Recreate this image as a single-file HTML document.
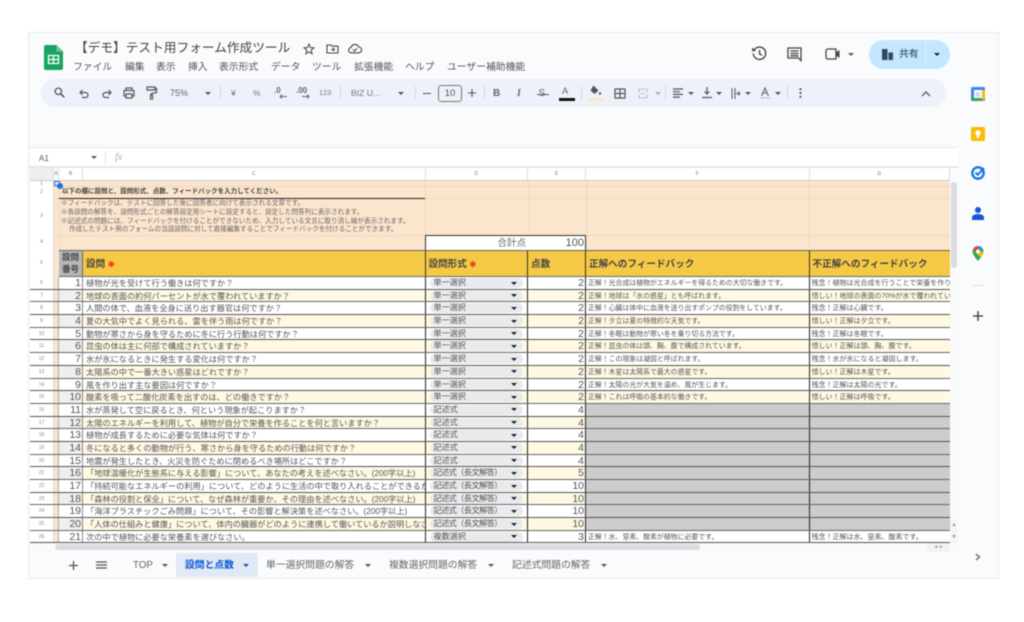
<!DOCTYPE html>
<html lang="ja"><head><meta charset="utf-8"><title>Sheet</title>
<style>
*{margin:0;padding:0;box-sizing:border-box}
html,body{width:1024px;height:622px;overflow:hidden;background:#fff}
body{font-family:"Liberation Sans","Noto Sans CJK JP",sans-serif;color:#555}
#w{position:absolute;left:0;top:0;width:1024px;height:622px;overflow:hidden;filter:blur(.55px)}
.a{position:absolute;white-space:nowrap}
.m{font-size:9.8px;top:60.5px;color:#555;line-height:13px}
.tb{top:87px;line-height:12px;color:#666}
.sep{position:absolute;width:1px;background:#d5d9e0;top:86px;height:14px}
.ar{position:absolute;width:0;height:0;border-left:3px solid transparent;border-right:3px solid transparent;border-top:3px solid #555}
svg{position:absolute;overflow:visible}
.ch{position:absolute;top:168px;height:13px;background:#fff;border-right:1px solid #ddd;border-bottom:1px solid #ccc;font-size:5px;line-height:13px;text-align:center;color:#777}
.rh{position:absolute;left:30px;width:24px;background:#fff;border-right:1px solid #ddd;font-size:5px;text-align:center;color:#888}
.tab{position:absolute;top:559px;font-size:9.8px;line-height:13px;color:#666;white-space:nowrap}
#g{position:absolute;left:30px;top:277px;width:920px;height:266px;overflow:hidden}
.r{display:flex;height:12.7px;border-bottom:1px solid #666;background:#fff;line-height:13.2px;white-space:nowrap}
.r:nth-child(even){background:#fff8e3}
.r:nth-child(odd){border-bottom-color:#555}
.r>span{display:block;height:100%;overflow:hidden;flex:none}
.r>span:nth-child(1){width:24px;background:#fff;font-size:5px;color:#888;text-align:center;border-right:1px solid #ddd;border-bottom:0}
.r>span:nth-child(2){width:5px;background:#fce5cd;border-right:1px solid #aaa}
.r>span:nth-child(3){width:24px;text-align:right;padding-right:1px;font-size:10.5px;color:#555;background:#fff;border-right:1px solid #888}
.r:nth-child(even)>span:nth-child(3){background:#efefef}
.r>span:nth-child(4){width:342.5px;font-size:8.2px;padding-left:3px;color:#555;border-right:1px solid #222}
.r>span:nth-child(5){width:102.5px;border-right:1px solid #222;padding:1px 4px 0 4px;position:relative}
.r>span:nth-child(6){width:58px;text-align:right;font-size:10.5px;padding-right:1px;color:#555;border-right:1px solid #222}
.r>span:nth-child(7){width:223.5px;font-size:6.9px;padding-left:2px;color:#555;border-right:1px solid #222}
.r>span:nth-child(8){width:140.5px;font-size:7px;padding-left:2px;color:#555}
.r>span>i{display:block;font-style:normal;height:10px;line-height:10px;font-size:8.1px;background:#e8eaed;border-radius:5px;padding-left:4px;color:#555;position:relative}
.r>span>i:after{content:"";position:absolute;right:6px;top:3.5px;border-left:3px solid transparent;border-right:3px solid transparent;border-top:3px solid #222}
.r>span>i.l{letter-spacing:-.5px}
.r>span.x{background:#ccc}
.h5{position:absolute;top:249.5px;height:27.5px;background:#f6c945;border-top:1px solid #666;border-bottom:1px solid #666;border-right:1px solid #333;font-size:9.6px;font-weight:700;color:#444;line-height:28px;padding-left:3px;white-space:nowrap}
.red{color:#e8431f;font-size:8px}
.vl{position:absolute;width:1px;background:#ecd7c0}
.hl{position:absolute;left:54px;width:896px;height:1px;background:#ecd7c0}
.nt{position:absolute;left:61px;font-size:6.6px;line-height:8.6px;color:#666;white-space:nowrap}
</style></head><body>
<div id="w">
<div class="a" style="left:28px;top:32px;width:971px;height:547px;background:#f9fbfd;border:1px solid #e9e9e9"></div>

<svg style="left:44px;top:45px" width="19" height="25" viewBox="0 0 19 25"><path d="M2 0H12.5L19 6.5V23a2 2 0 0 1-2 2H2a2 2 0 0 1-2-2V2a2 2 0 0 1 2-2z" fill="#18a45f"/><path d="M12.5 0L19 6.5H12.5z" fill="#6fc79a"/><path d="M4.5 10.5H14.5V18.5H4.5zM4.5 14.5H14.5M9.5 10.5V18.5" fill="none" stroke="#fff" stroke-width="1.3"/></svg>
<div class="a" style="left:75px;top:40px;font-size:12.7px;line-height:16px;color:#444">【デモ】テスト用フォーム作成ツール</div>
<svg style="left:303px;top:43px" width="12" height="12" viewBox="0 0 12 12"><path d="M6 1L7.4 4.5L11 4.8L8.2 7.1L9.1 10.7L6 8.8L2.9 10.7L3.8 7.1L1 4.8L4.6 4.5z" fill="none" stroke="#444" stroke-width="1"/></svg>
<svg style="left:326px;top:43px" width="13" height="11" viewBox="0 0 13 11"><path d="M1 2H5L6 3.2H12V10H1z" fill="none" stroke="#444" stroke-width="1.1"/><path d="M5 6.5H8.5M7 5L8.5 6.5L7 8" fill="none" stroke="#444"/></svg>
<svg style="left:348px;top:43px" width="14" height="11" viewBox="0 0 14 11"><path d="M3.5 9.8a2.7 2.7 0 0 1-.4-5.4A4 4 0 0 1 10.7 4a2.9 2.9 0 0 1 0 5.8z" fill="none" stroke="#444" stroke-width="1.1"/><path d="M5 6.5L6.5 8L9 5.3" fill="none" stroke="#444"/></svg>

<div class="a m" style="left:73px">ファイル</div>
<div class="a m" style="left:125px">編集</div>
<div class="a m" style="left:156px">表示</div>
<div class="a m" style="left:188px">挿入</div>
<div class="a m" style="left:219px">表示形式</div>
<div class="a m" style="left:271px">データ</div>
<div class="a m" style="left:312px">ツール</div>
<div class="a m" style="left:354px">拡張機能</div>
<div class="a m" style="left:405px">ヘルプ</div>
<div class="a m" style="left:447px">ユーザー補助機能</div>

<svg style="left:752px;top:46px" width="15" height="15" viewBox="0 0 15 15"><path d="M2.2 4A6.2 6.2 0 1 1 1.3 7.5M.8 2V4.6H3.4M7.5 4V7.8L10 9.3" fill="none" stroke="#444" stroke-width="1.4"/></svg>
<svg style="left:787px;top:47px" width="15" height="15" viewBox="0 0 15 15"><path d="M1 1H14V13.5L11.5 11H1zM3.5 4H11.5M3.5 6.5H11.5M3.5 8.8H11.5" fill="none" stroke="#444" stroke-width="1.3"/></svg>
<svg style="left:825px;top:48px" width="16" height="12" viewBox="0 0 16 12"><path d="M3 1H11V11H3a2 2 0 0 1-2-2V3a2 2 0 0 1 2-2z" fill="none" stroke="#444" stroke-width="1.3"/><path d="M11 4.5L14.5 2V10L11 7.5z" fill="#444"/></svg>
<div class="ar" style="left:848px;top:53px"></div>
<div class="a" style="left:869px;top:40px;width:81px;height:29px;border-radius:15px;background:#c2e7ff"></div>
<div class="a" style="left:925px;top:40px;width:1px;height:29px;background:#d9f0ff"></div>
<svg style="left:882px;top:49px" width="11" height="11" viewBox="0 0 11 11"><path d="M0 0H5.5V11H0zM6.5 3.5H11V11H6.5z" fill="#334a5e"/></svg>
<div class="a" style="left:899px;top:48px;font-size:9.8px;line-height:13px;font-weight:500;color:#44566a">共有</div>
<div class="ar" style="left:934px;top:53px;border-top-color:#222"></div>

<div class="a" style="left:41px;top:79px;width:905px;height:28px;border-radius:14px;background:#edf2fa"></div>
<svg style="left:54px;top:87px" width="11" height="11" viewBox="0 0 11 11"><circle cx="4.3" cy="4.3" r="3.2" fill="none" stroke="#555" stroke-width="1.3"/><path d="M6.8 6.8L10.3 10.3" stroke="#555" stroke-width="1.5"/></svg>
<svg style="left:79px;top:89px" width="10" height="9" viewBox="0 0 10 9"><path d="M3.5 1L1 3.5L3.5 6M1 3.5H6.5a2.5 2.5 0 0 1 0 5H3" fill="none" stroke="#555" stroke-width="1.2"/></svg>
<svg style="left:102px;top:89px" width="10" height="9" viewBox="0 0 10 9"><path d="M6.5 1L9 3.5L6.5 6M9 3.5H3.5a2.5 2.5 0 0 0 0 5H7" fill="none" stroke="#555" stroke-width="1.2"/></svg>
<svg style="left:123px;top:87px" width="12" height="12" viewBox="0 0 12 12"><path d="M3 3.5V1H9V3.5M3 9H1V3.5H11V9H9M3 7H9V11H3z" fill="none" stroke="#555" stroke-width="1.2"/></svg>
<svg style="left:146px;top:86px" width="11" height="14" viewBox="0 0 11 14"><path d="M1 1H9V4H1zM9 2.5H10.5V6.5L5.5 7.5V9M4.5 9H6.5V13H4.5z" fill="none" stroke="#555" stroke-width="1.2"/></svg>
<div class="a tb" style="left:170px;font-size:9px">75%</div>
<div class="ar" style="left:205px;top:92px"></div>
<div class="sep" style="left:220px"></div>
<div class="a tb" style="left:231px;font-size:8.5px">¥</div>
<div class="a tb" style="left:253px;font-size:8.5px;color:#777">%</div>
<div class="a tb" style="left:274px;font-size:8px;font-weight:700;top:85px">.0</div>
<svg style="left:279px;top:94px" width="8" height="5" viewBox="0 0 8 5"><path d="M8 2.5H1M3 .5L1 2.5L3 4.5" fill="none" stroke="#666"/></svg>
<div class="a tb" style="left:296px;font-size:8px;font-weight:700;top:85px">.00</div>
<svg style="left:302px;top:94px" width="8" height="5" viewBox="0 0 8 5"><path d="M0 2.5H7M5 .5L7 2.5L5 4.5" fill="none" stroke="#666"/></svg>
<div class="a tb" style="left:319px;font-size:7.3px;color:#777">123</div>
<div class="sep" style="left:340px"></div>
<div class="a tb" style="left:351px;font-size:8.6px;color:#777">BIZ U...</div>
<div class="ar" style="left:398px;top:92px"></div>
<div class="sep" style="left:415px"></div>
<div class="a" style="left:423px;top:93px;width:8px;height:1px;background:#555"></div>
<div class="a" style="left:438px;top:85px;width:24px;height:17px;border:1px solid #777;border-radius:3px;text-align:center;font-size:9.5px;line-height:15px;color:#555">10</div>
<svg style="left:468px;top:89px" width="8" height="8" viewBox="0 0 8 8"><path d="M4 0V8M0 4H8" stroke="#555" stroke-width="1.1"/></svg>
<div class="sep" style="left:484px"></div>
<div class="a tb" style="left:493px;top:88px;font-size:10px;font-weight:700;font-family:'Liberation Sans'">B</div>
<div class="a tb" style="left:517px;top:88px;font-size:10px;font-weight:700;font-style:italic;font-family:'Liberation Serif'">I</div>
<div class="a tb" style="left:538.5px;top:88px;font-size:10px;color:#666">S</div>
<div class="a" style="left:537px;top:93.5px;width:12px;height:1px;background:#555"></div>
<div class="a tb" style="left:562px;font-size:9.5px;top:85.5px">A</div>
<div class="a" style="left:559px;top:98px;width:16px;height:3px;background:#111"></div>
<div class="sep" style="left:581px"></div>
<svg style="left:589px;top:85px" width="13" height="11" viewBox="0 0 13 11"><path d="M4.5 .5L9.5 5.5L5.5 9L1.5 5.5z" fill="#555"/><circle cx="11" cy="8.5" r="1.2" fill="#555"/></svg>
<div class="a" style="left:588px;top:98px;width:16px;height:3px;background:#fce5cd"></div>
<svg style="left:614px;top:88px" width="12" height="11" viewBox="0 0 12 11"><path d="M1 1H11V10H1zM1 5.5H11M6 1V10" fill="none" stroke="#555" stroke-width="1.2"/></svg>
<svg style="left:638px;top:88px" width="10" height="11" viewBox="0 0 10 11"><path d="M1 4V1H9V4M1 7V10H9V7M3 5.5H7" fill="none" stroke="#aaa" stroke-width="1.1" stroke-dasharray="2 1"/></svg>
<div class="ar" style="left:655px;top:92px;border-top-color:#aaa"></div>
<div class="sep" style="left:665px"></div>
<svg style="left:673px;top:88px" width="10" height="11" viewBox="0 0 10 11"><path d="M0 1H10M0 3.7H7M0 6.4H10M0 9.1H7" stroke="#555" stroke-width="1.2"/></svg>
<div class="ar" style="left:688px;top:92px"></div>
<svg style="left:702px;top:87px" width="10" height="12" viewBox="0 0 10 12"><path d="M5 0V7M2.5 4.5L5 7L7.5 4.5M0 10.5H10" fill="none" stroke="#555" stroke-width="1.2"/></svg>
<div class="ar" style="left:716px;top:92px"></div>
<svg style="left:731px;top:88px" width="10" height="11" viewBox="0 0 10 11"><path d="M1 0V11M4 0V11M4 5.5H9M7 3.5L9 5.5L7 7.5" fill="none" stroke="#666" stroke-width="1.1"/></svg>
<div class="ar" style="left:745px;top:92px"></div>
<svg style="left:760px;top:87px" width="11" height="12" viewBox="0 0 11 12"><path d="M1.5 9L5 1L8.5 9M2.8 6H7.2" fill="none" stroke="#666" stroke-width="1.1"/><path d="M1 11H10" stroke="#888" stroke-dasharray="1 1"/></svg>
<div class="ar" style="left:775px;top:92px"></div>
<div class="sep" style="left:787px"></div>
<svg style="left:799px;top:88px" width="3" height="10" viewBox="0 0 3 10"><circle cx="1.5" cy="1.2" r="1.1" fill="#555"/><circle cx="1.5" cy="5" r="1.1" fill="#555"/><circle cx="1.5" cy="8.8" r="1.1" fill="#555"/></svg>
<svg style="left:921px;top:91px" width="10" height="6" viewBox="0 0 10 6"><path d="M1 5L5 1L9 5" fill="none" stroke="#666" stroke-width="1.4"/></svg>

<div class="a" style="left:29px;top:147px;width:929px;height:21px;background:#fff;border-top:1px solid #e6e6e6;border-bottom:2px solid #e6e6e6"></div>
<div class="a" style="left:39px;top:153px;font-size:8px;line-height:11px;color:#555">A1</div>
<div class="ar" style="left:91px;top:156px"></div>
<div class="a" style="left:105px;top:152px;width:1px;height:11px;background:#ddd"></div>
<div class="a" style="left:115px;top:151px;font-size:10px;line-height:13px;font-style:italic;font-family:'Liberation Serif';color:#aaa">fx</div>

<div class="ch" style="left:30px;width:24px;background:#eee"></div>
<div class="ch" style="left:54px;width:5px">A</div>
<div class="ch" style="left:59px;width:24px">B</div>
<div class="ch" style="left:83px;width:342.5px">C</div>
<div class="ch" style="left:425.5px;width:102.5px">D</div>
<div class="ch" style="left:528px;width:58px">E</div>
<div class="ch" style="left:586px;width:223.5px">F</div>
<div class="ch" style="left:809.5px;width:140.5px">G</div>

<div class="rh" style="top:181px;height:5px;line-height:7px;overflow:hidden">1</div>
<div class="rh" style="top:186px;height:12px;line-height:12px">2</div>
<div class="rh" style="top:198px;height:37px;line-height:37px">3</div>
<div class="rh" style="top:235px;height:14.5px;line-height:14.5px">4</div>
<div class="rh" style="top:249.5px;height:27.5px;line-height:27.5px">5</div>

<div class="a" style="left:54px;top:181px;width:896px;height:69px;background:#fce5cd"></div>
<div class="hl" style="top:186px"></div><div class="hl" style="top:198px"></div><div class="hl" style="top:235px"></div>
<div class="vl" style="left:59px;top:181px;height:69px"></div>
<div class="vl" style="left:425px;top:181px;height:69px"></div>
<div class="vl" style="left:528px;top:181px;height:69px"></div>
<div class="vl" style="left:586px;top:181px;height:69px"></div>
<div class="vl" style="left:809px;top:181px;height:69px"></div>
<div class="a" style="left:62px;top:187px;font-size:6.5px;line-height:10px;font-weight:700;color:#444">以下の欄に設問と、設問形式、点数、フィードバックを入力してください。</div>
<div class="a" style="left:59px;top:197.5px;width:366px;height:1px;background:#222"></div>
<div class="nt" style="top:200px">※フィードバックは、テストに回答した後に回答者に向けて表示される文章です。</div>
<div class="nt" style="top:209px">※各設問の解答を、設問形式ごとの解答設定用シートに設定すると、設定した問答列に表示されます。</div>
<div class="nt" style="top:217.5px">※記述式の問題には、フィードバックを付けることができないため、入力している文言に取り消し線が表示されます。</div>
<div class="nt" style="top:226px;left:69px">作成したテスト用のフォームの当該設問に対して直接編集することでフィードバックを付けることができます。</div>
<div class="a" style="left:425px;top:235px;width:161px;height:15px;background:#fff;border:1px solid #333;border-bottom:0"></div>
<div class="a" style="left:425px;top:236.5px;width:102px;text-align:right;font-size:9.5px;line-height:13px;color:#666;padding-right:1px">合計点</div>
<div class="a" style="left:528px;top:236.5px;width:57px;text-align:right;font-size:11px;line-height:13px;color:#555;padding-right:1px">100</div>

<div class="a" style="left:54px;top:250px;width:5px;height:293px;background:#fce5cd"></div>
<div class="h5" style="left:59px;width:24px;background:#b7b7b7;font-size:8.5px;line-height:11.5px;padding:1.5px 0 0 0;text-align:center;white-space:normal;border-right-color:#666">設問<br>番号</div>
<div class="h5" style="left:83px;width:342.5px">設問 <span class="red">✱</span></div>
<div class="h5" style="left:425.5px;width:102.5px">設問形式 <span class="red">✱</span></div>
<div class="h5" style="left:528px;width:58px">点数</div>
<div class="h5" style="left:586px;width:223.5px">正解へのフィードバック</div>
<div class="h5" style="left:809.5px;width:140.5px;border-right:0">不正解へのフィードバック</div>

<div id="g">
<div class="r"><span>6</span><span></span><span>1</span><span>植物が光を受けて行う働きは何ですか？</span><span><i>単一選択</i></span><span>2</span><span>正解！光合成は植物がエネルギーを得るための大切な働きです。</span><span>残念！植物は光合成を行うことで栄養を作ります。</span></div>
<div class="r"><span>7</span><span></span><span>2</span><span>地球の表面の約何パーセントが水で覆われていますか？</span><span><i>単一選択</i></span><span>2</span><span>正解！地球は「水の惑星」とも呼ばれます。</span><span>惜しい！地球の表面の70%が水で覆われています。</span></div>
<div class="r"><span>8</span><span></span><span>3</span><span>人間の体で、血液を全身に送り出す器官は何ですか？</span><span><i>単一選択</i></span><span>2</span><span>正解！心臓は体中に血液を送り出すポンプの役割をしています。</span><span>残念！正解は心臓です。</span></div>
<div class="r"><span>9</span><span></span><span>4</span><span>夏の大気中でよく見られる、雷を伴う雨は何ですか？</span><span><i>単一選択</i></span><span>2</span><span>正解！夕立は夏の特徴的な天気です。</span><span>惜しい！正解は夕立です。</span></div>
<div class="r"><span>10</span><span></span><span>5</span><span>動物が寒さから身を守るために冬に行う行動は何ですか？</span><span><i>単一選択</i></span><span>2</span><span>正解！冬眠は動物が寒い冬を乗り切る方法です。</span><span>残念！正解は冬眠です。</span></div>
<div class="r"><span>11</span><span></span><span>6</span><span>昆虫の体は主に何部で構成されていますか？</span><span><i>単一選択</i></span><span>2</span><span>正解！昆虫の体は頭、胸、腹で構成されています。</span><span>惜しい！正解は頭、胸、腹です。</span></div>
<div class="r"><span>12</span><span></span><span>7</span><span>水が氷になるときに発生する変化は何ですか？</span><span><i>単一選択</i></span><span>2</span><span>正解！この現象は凝固と呼ばれます。</span><span>残念！水が氷になると凝固します。</span></div>
<div class="r"><span>13</span><span></span><span>8</span><span>太陽系の中で一番大きい惑星はどれですか？</span><span><i>単一選択</i></span><span>2</span><span>正解！木星は太陽系で最大の惑星です。</span><span>惜しい！正解は木星です。</span></div>
<div class="r"><span>14</span><span></span><span>9</span><span>風を作り出す主な要因は何ですか？</span><span><i>単一選択</i></span><span>2</span><span>正解！太陽の光が大気を温め、風が生じます。</span><span>残念！正解は太陽の光です。</span></div>
<div class="r"><span>15</span><span></span><span>10</span><span>酸素を吸って二酸化炭素を出すのは、どの働きですか？</span><span><i>単一選択</i></span><span>2</span><span>正解！これは呼吸の基本的な働きです。</span><span>惜しい！正解は呼吸です。</span></div>
<div class="r"><span>16</span><span></span><span>11</span><span>水が蒸発して空に戻るとき、何という現象が起こりますか？</span><span><i>記述式</i></span><span>4</span><span class="x"></span><span class="x"></span></div>
<div class="r"><span>17</span><span></span><span>12</span><span>太陽のエネルギーを利用して、植物が自分で栄養を作ることを何と言いますか？</span><span><i>記述式</i></span><span>4</span><span class="x"></span><span class="x"></span></div>
<div class="r"><span>18</span><span></span><span>13</span><span>植物が成長するために必要な気体は何ですか？</span><span><i>記述式</i></span><span>4</span><span class="x"></span><span class="x"></span></div>
<div class="r"><span>19</span><span></span><span>14</span><span>冬になると多くの動物が行う、寒さから身を守るための行動は何ですか？</span><span><i>記述式</i></span><span>4</span><span class="x"></span><span class="x"></span></div>
<div class="r"><span>20</span><span></span><span>15</span><span>地震が発生したとき、火災を防ぐために閉めるべき場所はどこですか？</span><span><i>記述式</i></span><span>4</span><span class="x"></span><span class="x"></span></div>
<div class="r"><span>21</span><span></span><span>16</span><span>「地球温暖化が生態系に与える影響」について、あなたの考えを述べなさい。(200字以上)</span><span><i class="l">記述式（長文解答）</i></span><span>5</span><span class="x"></span><span class="x"></span></div>
<div class="r"><span>22</span><span></span><span>17</span><span>「持続可能なエネルギーの利用」について、どのように生活の中で取り入れることができるか</span><span><i class="l">記述式（長文解答）</i></span><span>10</span><span class="x"></span><span class="x"></span></div>
<div class="r"><span>23</span><span></span><span>18</span><span>「森林の役割と保全」について、なぜ森林が重要か、その理由を述べなさい。(200字以上)</span><span><i class="l">記述式（長文解答）</i></span><span>10</span><span class="x"></span><span class="x"></span></div>
<div class="r"><span>24</span><span></span><span>19</span><span>「海洋プラスチックごみ問題」について、その影響と解決策を述べなさい。(200字以上)</span><span><i class="l">記述式（長文解答）</i></span><span>10</span><span class="x"></span><span class="x"></span></div>
<div class="r"><span>25</span><span></span><span>20</span><span>「人体の仕組みと健康」について、体内の臓器がどのように連携して働いているか説明しなさい</span><span><i class="l">記述式（長文解答）</i></span><span>10</span><span class="x"></span><span class="x"></span></div>
<div class="r"><span>26</span><span></span><span>21</span><span>次の中で植物に必要な栄養素を選びなさい。</span><span><i>複数選択</i></span><span>3</span><span>正解！水、窒素、酸素が植物に必要です。</span><span>残念！正解は水、窒素、酸素です。</span></div>
</div>

<div class="a" style="left:54px;top:181px;width:6px;height:5px;border:1px solid #1a73e8"></div>
<div class="a" style="left:57px;top:183px;width:6px;height:6px;border-radius:50%;background:#1a73e8"></div>

<div class="a" style="left:950px;top:181px;width:8px;height:362px;background:#fafafa"></div>
<div class="a" style="left:951px;top:182px;width:6px;height:86px;border-radius:3px;background:#dadce0"></div>
<div class="a" style="left:950px;top:519px;width:8px;height:24px;background:#f5f5f5;font-size:5px;line-height:12px;text-align:center;color:#888">▲<br>▼</div>
<div class="a" style="left:30px;top:543px;width:928px;height:10px;background:#fafafa"></div>
<div class="a" style="left:55px;top:544px;width:645px;height:6px;border-radius:3px;background:#dadce0"></div>
<div class="a" style="left:927px;top:543px;width:23px;height:9px;background:#f2f2f2;font-size:5px;line-height:9px;text-align:center;color:#888">◂ &nbsp;▸</div>

<svg style="left:69px;top:561px" width="9" height="9" viewBox="0 0 9 9"><path d="M4.5 0V9M0 4.5H9" stroke="#555" stroke-width="1.3"/></svg>
<svg style="left:96px;top:561px" width="11" height="8" viewBox="0 0 11 8"><path d="M0 1H11M0 4H11M0 7H11" stroke="#555" stroke-width="1.2"/></svg>
<div class="tab" style="left:133px">TOP</div><div class="ar" style="left:162px;top:564px"></div>
<div class="a" style="left:176px;top:553px;width:82px;height:24px;background:#e1e9f7"></div>
<div class="tab" style="left:185px;color:#0b57d0;font-weight:700">設問と点数</div><div class="ar" style="left:243px;top:564px;border-top-color:#0b57d0"></div>
<div class="tab" style="left:266px">単一選択問題の解答</div><div class="ar" style="left:365px;top:564px"></div>
<div class="tab" style="left:389px">複数選択問題の解答</div><div class="ar" style="left:488px;top:564px"></div>
<div class="tab" style="left:512px">記述式問題の解答</div><div class="ar" style="left:601px;top:564px"></div>

<svg style="left:971px;top:87px" width="14" height="14" viewBox="0 0 14 14"><rect width="14" height="14" rx="1.5" fill="#4285f4"/><rect x="3" y="3" width="8" height="8" fill="#fff"/><path d="M0 11H11V14H1.5A1.5 1.5 0 0 1 0 12.5z" fill="#34a853"/><path d="M11 3H14V11L11 14z" fill="#fbbc04"/><text x="7" y="9.5" font-size="5" text-anchor="middle" fill="#4285f4" font-family="Liberation Sans">31</text></svg>
<svg style="left:971px;top:127px" width="14" height="14" viewBox="0 0 14 14"><rect width="14" height="14" rx="1.5" fill="#fbbc04"/><circle cx="7" cy="6" r="2.8" fill="#fff"/><rect x="5.8" y="8.5" width="2.4" height="2.5" fill="#fff"/></svg>
<svg style="left:971px;top:166px" width="14" height="14" viewBox="0 0 14 14"><circle cx="7" cy="7" r="5.7" fill="none" stroke="#1a73e8" stroke-width="2.3"/><path d="M4.5 6.5L6.8 8.8L13 2" fill="none" stroke="#1a73e8" stroke-width="2"/></svg>
<svg style="left:972px;top:207px" width="12" height="13" viewBox="0 0 12 13"><circle cx="6" cy="3" r="3" fill="#1a56d6"/><path d="M0 13V10.5C0 8 3 7 6 7S12 8 12 10.5V13z" fill="#1a56d6"/></svg>
<svg style="left:972px;top:246px" width="12" height="15" viewBox="0 0 12 15"><path d="M6 0A5.5 5.5 0 0 0 .5 5.5C.5 9 6 15 6 15S11.5 9 11.5 5.5A5.5 5.5 0 0 0 6 0z" fill="#34a853"/><path d="M1.5 2.5A5.5 5.5 0 0 1 6 0V4L3 6z" fill="#ea4335"/><path d="M6 0A5.5 5.5 0 0 1 10.5 2.5L8 5z" fill="#4285f4"/><path d="M8 6L11.5 5.5C11.5 7 10 9.5 8.5 11L5 8z" fill="#fbbc04"/><circle cx="6" cy="5.5" r="2" fill="#fff"/></svg>
<div class="a" style="left:971px;top:285px;width:14px;height:1px;background:#e3e3e3"></div>
<svg style="left:973px;top:311px" width="10" height="10" viewBox="0 0 10 10"><path d="M5 0V10M0 5H10" stroke="#333" stroke-width="1.3"/></svg>
<svg style="left:975px;top:553px" width="6" height="8" viewBox="0 0 6 8"><path d="M1 1L4.5 4L1 7" fill="none" stroke="#666" stroke-width="1.4"/></svg>
</div>
</body></html>
